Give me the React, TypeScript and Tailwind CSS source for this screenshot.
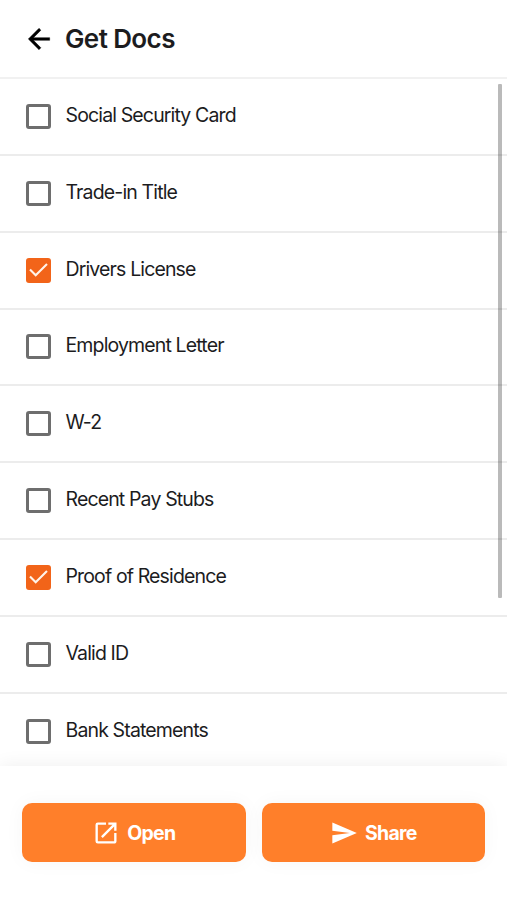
import { useState } from "react"
import { MdOpenInNew, MdSend } from "react-icons/md"

type Doc = {
  id: number
  name: string
  checked: boolean
}

const initialDocs: Doc[] = [
  { id: 1, name: "Social Security Card", checked: false },
  { id: 2, name: "Trade-in Title", checked: false },
  { id: 3, name: "Drivers License", checked: true },
  { id: 4, name: "Employment Letter", checked: false },
  { id: 5, name: "W-2", checked: false },
  { id: 6, name: "Recent Pay Stubs", checked: false },
  { id: 7, name: "Proof of Residence", checked: true },
  { id: 8, name: "Valid ID", checked: false },
  { id: 9, name: "Bank Statements", checked: false },
]

function BackArrow() {
  return (
    <svg width="32" height="32" viewBox="0 0 24 24" fill="currentColor" stroke="currentColor" strokeWidth="0.35">
      <path d="M20 11H7.83l5.59-5.59L12 4l-8 8 8 8 1.41-1.41L7.83 13H20v-2z" />
    </svg>
  )
}

function Checkbox({ checked }: { checked: boolean }) {
  if (!checked) {
    return <span className="block size-[25px] shrink-0 rounded-[3px] border-3 border-[#6e6e6e] bg-white" />
  }
  return (
    <span className="block size-[25px] shrink-0 rounded-[3px] bg-[#f26419]">
      <svg viewBox="0 0 25 25" fill="none" stroke="#fff4ea" strokeWidth="2.1">
        <path d="M4 11.6 L9.7 17.3 L21 6" />
      </svg>
    </span>
  )
}

export default function App() {
  const [docs, setDocs] = useState(initialDocs)

  const toggle = (id: number) => {
    setDocs(docs.map((doc) => (doc.id === id ? { ...doc, checked: !doc.checked } : doc)))
  }

  return (
    <div className="flex h-[900px] w-full flex-col overflow-hidden bg-white font-['Inter','Liberation_Sans',sans-serif] text-[#1c1c1e]">
      {/* Header */}
      <header className="flex h-[79px] shrink-0 items-center gap-[10px] border-b-2 border-[#f1f1f1] pl-[23px]">
        <button type="button" aria-label="Back" className="text-black">
          <BackArrow />
        </button>
        <h1 className="text-[26px] leading-8 font-semibold tracking-[-0.6px]">Get Docs</h1>
      </header>

      {/* Document list */}
      <main className="relative min-h-0 flex-1 overflow-hidden">
        <ul>
          {docs.map((doc) => (
            <li key={doc.id} className="h-[76.85px] border-b-2 border-[#ececec]">
              <button
                type="button"
                onClick={() => toggle(doc.id)}
                className="flex h-full w-full items-center gap-[14.5px] pl-[26px] text-left"
              >
                <Checkbox checked={doc.checked} />
                <span className="pb-[3px] text-[19.5px] leading-6 tracking-[-0.86px]">{doc.name}</span>
              </button>
            </li>
          ))}
        </ul>
        {/* Scroll thumb */}
        <div className="absolute top-[5px] right-[5px] h-[514px] w-1 rounded-[1px] bg-black/27" />
      </main>

      {/* Actions */}
      <footer className="relative flex h-[134px] shrink-0 gap-4 bg-white px-[22px] pt-[37px] shadow-[0_0_18px_rgba(0,0,0,0.07)]">
        <button
          type="button"
          className="flex h-[59px] flex-1 items-center justify-center gap-[7px] rounded-[10px] bg-[#ff7f2a] text-[19.5px] font-bold tracking-[-0.75px] text-white shadow-[0_0_20px_rgba(0,0,0,0.04)]"
        >
          <MdOpenInNew size={28} />
          <span className="pt-[2px]">Open</span>
        </button>
        <button
          type="button"
          className="flex h-[59px] flex-1 items-center justify-center gap-[7px] rounded-[10px] bg-[#ff7f2a] text-[19.5px] font-bold tracking-[-0.75px] text-white shadow-[0_0_20px_rgba(0,0,0,0.04)]"
        >
          <MdSend size={28} />
          <span className="pt-[2px]">Share</span>
        </button>
      </footer>
    </div>
  )
}
